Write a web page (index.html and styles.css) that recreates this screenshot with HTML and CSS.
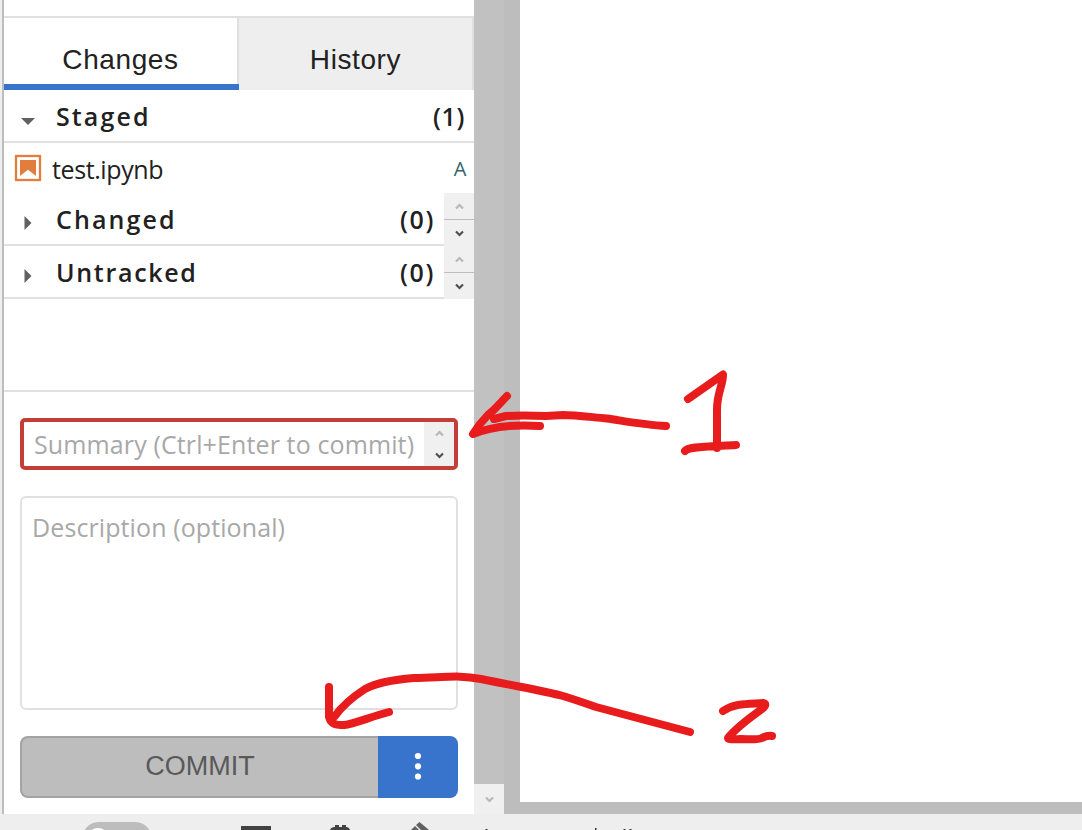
FILE: index.html
```html
<!DOCTYPE html>
<html lang="en">
<head>
<meta charset="utf-8">
<title>Git</title>
<link rel="stylesheet" href="styles.css">
</head>
<body>
<div class="app">
  <div class="workspace">
    <section class="panel">
      <div class="toolbar"></div>
      <nav class="tabs">
        <div class="tab active"><span>Changes</span></div>
        <div class="tab"><span class="history">History</span></div>
      </nav>
      <div class="group">
        <div class="heading">
          <svg class="caret" width="16" height="16"><path d="M1 7H15L8 14Z"/></svg>
          <span class="name staged">Staged</span><span class="count one">(1)</span>
        </div>
      </div>
      <div class="file">
        <svg class="book" width="28" height="28"><rect x="2" y="2" width="24" height="24" fill="#fff" stroke="#e27d3c" stroke-width="2.3"/><path d="M6 6H22V22L14 15.7L6 22Z" fill="#e27d3c"/></svg>
        <span class="filename">test.ipynb</span><span class="status">A</span>
      </div>
      <div class="group">
        <div class="heading">
          <svg class="caret" width="16" height="16"><path d="M4.500 2L11.500 9L4.500 16Z"/></svg>
          <span class="name changed">Changed</span><span class="count">(0)</span>
        </div>
        <div class="spin"><div><svg width="10" height="7"><path class="dim" d="M2 5.5L5.500 2L9 5.5"/></svg></div><div><svg width="10" height="7"><path d="M2 1.5L5.500 5L9 1.5"/></svg></div></div>
      </div>
      <div class="group">
        <div class="heading">
          <svg class="caret" width="16" height="16"><path d="M4.500 2L11.500 9L4.500 16Z"/></svg>
          <span class="name untracked">Untracked</span><span class="count">(0)</span>
        </div>
        <div class="spin"><div><svg width="10" height="7"><path class="dim" d="M2 5.5L5.500 2L9 5.5"/></svg></div><div><svg width="10" height="7"><path d="M2 1.5L5.500 5L9 1.5"/></svg></div></div>
      </div>
      <div class="spacer"></div>
      <div class="form">
        <div class="summary"><span>Summary (Ctrl+Enter to commit)</span>
          <div class="spin plain"><div><svg width="10" height="7"><path class="dim" d="M2 5.5L5.500 2L9 5.5"/></svg></div><div><svg width="10" height="7"><path d="M2 1.5L5.500 5L9 1.5"/></svg></div></div>
        </div>
        <div class="description"><span>Description (optional)</span></div>
        <div class="buttons">
          <div class="commit"><span>COMMIT</span></div>
          <div class="more"><svg width="10" height="30"><circle cx="5" cy="4" r="3.1"/><circle cx="5" cy="14.300" r="3.1"/><circle cx="5" cy="24.500" r="3.1"/></svg></div>
        </div>
      </div>
    </section>
    <div class="scrollbar"><div class="down"><svg width="10" height="7"><path class="dim" d="M2 1.5L5.500 5L9 1.5"/></svg></div></div>
    <main class="document"></main>
  </div>
  <footer class="statusbar">
    <div class="toggle"><i></i></div>
    <svg class="icons" width="440" height="16" viewBox="220 814 440 16">
      <path d="M241 826H271V830H241Z" fill="#424242"/>
      <path d="M330 830Q331 827 335 827V825H339V827H342V825H346V827Q349 827 350 830Z" fill="#424242"/>
      <path d="M411 830L415 826L419 830ZM416 825L419.5 822L429 830H421Z" fill="#616161"/>
      <path d="M485.500 829H487.500V830H485.500ZM595 828H596.500V830H595ZM623.500 829H625.500V830H623.500ZM629.500 829H631.500V830H629.500Z" fill="#333"/>
    </svg>
  </footer>
  <svg class="ink" width="1082" height="830">
    <path d="M666 426C646 425 630 422 607 418.500C590 417 575 415 563 415L546 416C530 415.500 515 415.500 506 416L494 419"/>
    <path d="M507 396C500 403 497 408 488 415Q479 424 473 434C490 427 510 424 540 426"/>
    <path d="M688 399L723 374.500C723 386 717 392 717 410V448M685 451C688 447 700 447 736 445"/>
    <path d="M690 732L596 707Q576 700 563 696C545 691 520 687 481 679C460 675 450 677 414 678C390 680 374 684 365 689Q345 702 335 716"/>
    <path d="M329 687V717Q331 726 344 725C354 724 370 717 389 712"/>
    <path d="M723 711C735 703 748 704 763 703Q768 704 762 709C748 719 735 729 728 738Q728 740 741 739Q758 740 762 738Q767 735 772 736"/>
  </svg>
</div>
</body>
</html>
```
FILE: styles.css
```css
* { box-sizing: border-box; }
body { margin: 0; overflow: hidden; color: #212121; background: #fff; font-family: "Open Sans", "Noto Sans", sans-serif; }
.app { width: 1082px; height: 830px; display: flex; flex-direction: column; position: relative; }
.workspace { display: flex; height: 814px; border-left: 2px solid #eee; }
.panel { width: 472px; border-left: 2px solid #bdbdbd; display: flex; flex-direction: column; }
.toolbar { height: 18px; border-bottom: 2px solid #e0e0e0; flex: none; }
.tabs { display: flex; height: 72px; flex: none; font: 28px "Liberation Sans", sans-serif; }
.tab { width: 235px; background: #eee; border-right: 2px solid #e0e0e0; display: flex; justify-content: center; padding-top: 25px; line-height: 34px; position: relative; letter-spacing: .6px; }
.active { background: #fff; }
.active::after { content: ""; position: absolute; left: 0; right: -2px; bottom: 0; height: 6px; background: #3874cb; }
.group { height: 53px; display: flex; flex: none; }
.heading { flex: 1; border-bottom: 2px solid #e0e0e0; display: flex; align-items: center; padding: 0 9px 0 16px; font-size: 25px; font-weight: 560; letter-spacing: 2.1px; }
.caret { margin: 6px 20px 0 0; fill: #616161; }
.name, .count { line-height: 34px; padding-top: 1px; }
.untracked { letter-spacing: 1.7px; }
.count { margin-left: auto; letter-spacing: 1.6px; }
.one { letter-spacing: .6px; }
.file { height: 50px; flex: none; display: flex; align-items: center; padding: 0 8px 0 10px; font-size: 25px; letter-spacing: -.4px; }
.filename { margin-left: 10px; padding-top: 1px; }
.status { margin-left: auto; font-size: 20px; color: #33666a; }
.spin { width: 30px; background: #f0f0f0; display: flex; flex-direction: column; }
.spin > div { flex: 1; display: flex; align-items: center; justify-content: center; }
.spin > div + div { border-top: 1px solid #bdbdbd; }
.plain > div + div { border: 0; }
.spin path, .down path { fill: none; stroke: #505050; stroke-width: 2.2; }
.spin path.dim, .down path.dim { stroke: #b8b8b8; }
.spacer { height: 93px; border-bottom: 2px solid #e0e0e0; flex: none; }
.form { padding: 26px 16px 16px; display: flex; flex-direction: column; gap: 26px; }
.summary { height: 52px; border: 4px solid #c33e37; border-radius: 5px; display: flex; align-items: stretch; justify-content: space-between; padding-left: 10px; color: #a8a8a8; font-size: 25px; line-height: 45px; white-space: nowrap; }
.summary > span { letter-spacing: .12px; }
.description { height: 214px; border: 2px solid #e0e0e0; border-radius: 6px; padding: 12px 10px; color: #a8a8a8; font-size: 25px; line-height: 35px; letter-spacing: .1px; }
.buttons { display: flex; height: 62px; }
.commit { width: 358px; background: #bdbdbd; border: 2px solid #a3a3a3; border-right: 0; border-radius: 8px 0 0 8px; display: flex; justify-content: center; align-items: center; padding-bottom: 2px; font: 27px "Liberation Sans", sans-serif; color: #595959; }
.more { width: 80px; background: #3874cb; border-radius: 0 8px 8px 0; display: flex; justify-content: center; align-items: center; fill: #fff; }
.scrollbar { width: 30px; background: #c1c1c1; display: flex; align-items: flex-end; }
.down { width: 30px; height: 30px; background: #f0f0f0; display: flex; align-items: center; justify-content: center; }
.document { flex: 1; border-left: 16px solid #bdbdbd; border-bottom: 12px solid #bdbdbd; background: #fff; }
.statusbar { height: 16px; background: #eee; display: flex; overflow: hidden; padding-left: 82px; }
.toggle { width: 70px; height: 34px; margin-top: 8px; border-radius: 17px; background: #bdbdbd; padding: 6px; flex: none; }
.toggle i { display: block; width: 22px; height: 22px; border-radius: 50%; background: #fff; margin-left: -1px; }
.icons { margin-left: 68px; flex: none; }
.ink { position: absolute; left: 0; top: 0; fill: none; stroke: #e81c1c; stroke-width: 8; stroke-linecap: round; stroke-linejoin: round; }
```
